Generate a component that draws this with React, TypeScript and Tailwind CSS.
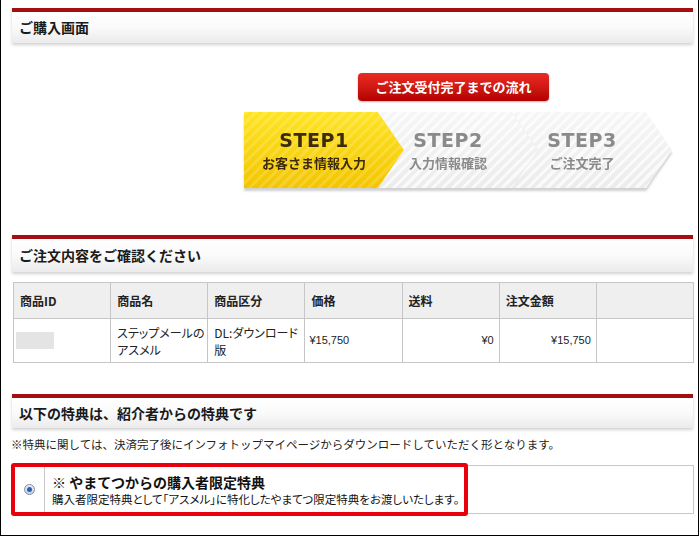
import React from 'react';

const jp = "font-['Noto_Sans_CJK_JP','Noto_Sans',sans-serif]";

function SectionTitle({ children, className = '' }: { children: React.ReactNode; className?: string }) {
  return (
    <div
      className={
        'flex items-center border-t-4 border-[#a30f12] bg-gradient-to-b from-white via-[#fafafa] to-[#ebebeb] px-[7px] text-[14px] font-bold text-[#1a1a1a] shadow-[0_2px_3px_rgba(0,0,0,0.18)] ' +
        className
      }
    >
      {children}
    </div>
  );
}

const steps = [
  { no: 'STEP1', label: 'お客さま情報入力', active: true },
  { no: 'STEP2', label: '入力情報確認', active: false },
  { no: 'STEP3', label: 'ご注文完了', active: false },
];

export default function App() {
  return (
    <div className={`relative h-[536px] w-[699px] overflow-hidden border-x border-b border-black bg-white ${jp}`}>
      <div className="pl-[11px] pr-[5px] pt-[8px]">
        <SectionTitle className="h-[35px]">ご購入画面</SectionTitle>

        {/* 流れ */}
        <div className="ml-[232px] mt-[30px] flex flex-col">
          <div className="ml-[114px] flex h-[28px] w-[191px] items-center justify-center rounded-[4px] bg-gradient-to-b from-[#ec2a22] to-[#b40000] text-[13px] font-bold text-white shadow-[0_1px_2px_rgba(0,0,0,0.3)]">
            ご注文受付完了までの流れ
          </div>

          <div className="mt-[11px] flex h-[76px] drop-shadow-[0_3px_1px_rgba(0,0,0,0.18)]">
            {steps.map((s, i) => (
              <div
                key={s.no}
                className={
                  'flex h-[76px] w-[160px] shrink-0 flex-col items-center justify-center pr-[20px] leading-none ' +
                  (i === 0
                    ? '[clip-path:polygon(0_0,134px_0,160px_50%,134px_100%,0_100%)] bg-[image:repeating-linear-gradient(135deg,rgba(255,255,255,0.16)_0px,rgba(255,255,255,0.16)_3px,transparent_3px,transparent_7px),linear-gradient(#ffe424,#f3c500)] text-[#3b2a0c]'
                    : '-ml-[26px] [clip-path:polygon(0_0,134px_0,160px_50%,134px_100%,0_100%,26px_50%)] bg-[image:repeating-linear-gradient(135deg,rgba(255,255,255,0.7)_0px,rgba(255,255,255,0.7)_3px,transparent_3px,transparent_7px),linear-gradient(#f6f6f6,#ececec)] text-[#8a8a8a]')
                }
              >
                <span className="font-['DejaVu_Sans',Arial,sans-serif] text-[19px] font-bold tracking-[0.5px]">{s.no}</span>
                <span className="mt-[6px] text-[13px] font-bold">{s.label}</span>
              </div>
            ))}
          </div>
        </div>

        <SectionTitle className="mt-[47px] h-[37px]">ご注文内容をご確認ください</SectionTitle>

        <table className="ml-[1px] mt-[10px] w-[681px] table-fixed border-collapse text-[12px] text-[#222]">
          <thead>
            <tr className="h-[36px] bg-[#efefef]">
              {['商品ID', '商品名', '商品区分', '価格', '送料', '注文金額', ''].map((h, i) => (
                <th key={i} className="border border-[#c6c6c6] px-[6px] text-left font-bold">
                  {h}
                </th>
              ))}
            </tr>
          </thead>
          <tbody>
            <tr className="h-[44px] [font-feature-settings:'palt']">
              <td className="border border-[#c6c6c6] pl-[2px]">
                <div className="h-[17px] w-[38px] bg-[#e4e4e4]" />
              </td>
              <td className="whitespace-nowrap border border-[#c6c6c6] px-[6px] leading-[17px]">
                ステップメールの
                <br />
                アスメル
              </td>
              <td className="whitespace-nowrap border border-[#c6c6c6] px-[6px] leading-[17px]">
                DL:ダウンロード
                <br />
                版
              </td>
              <td className="border border-[#c6c6c6] px-[4px] font-['Liberation_Sans',Arial,sans-serif] text-[11px]">¥15,750</td>
              <td className="border border-[#c6c6c6] px-[5px] text-right font-['Liberation_Sans',Arial,sans-serif] text-[11px]">¥0</td>
              <td className="border border-[#c6c6c6] px-[5px] text-right font-['Liberation_Sans',Arial,sans-serif] text-[11px]">¥15,750</td>
              <td className="border border-[#c6c6c6]" />
            </tr>
          </tbody>
        </table>

        <SectionTitle className="mt-[31px] h-[34px]">以下の特典は、紹介者からの特典です</SectionTitle>

        <p className="-ml-[1px] mt-[8px] text-[11.5px] leading-[16px] text-[#222]">
          ※特典に関しては、決済完了後にインフォトップマイページからダウンロードしていただく形となります。
        </p>

        {/* 特典 */}
        <div className="relative ml-[1px] mt-[13px] flex h-[49px] w-[681px] border border-[#c8c8c8]">
          <div className="flex w-[31px] shrink-0 items-center justify-center border-r border-[#c8c8c8]">
            <span className="flex h-[11px] w-[11px] items-center justify-center rounded-full border border-[#7f8fa6] bg-gradient-to-b from-[#e8eef6] to-[#c9d3e0]">
              <span className="h-[5px] w-[5px] rounded-full bg-[#2d5fae]" />
            </span>
          </div>
          <div className="flex flex-col justify-center pl-[7px] text-[#111]">
            <span className="text-[14px] font-bold leading-[18px]">※ やまてつからの購入者限定特典</span>
            <span className="text-[11.5px] leading-[16px] [font-feature-settings:'palt']">
              購入者限定特典として「アスメル」に特化したやまてつ限定特典をお渡しいたします。
            </span>
          </div>
          <div className="pointer-events-none absolute -left-[3px] -top-[3px] h-[53px] w-[457px] rounded-[3px] border-4 border-[#e8000d]" />
        </div>
      </div>
    </div>
  );
}
